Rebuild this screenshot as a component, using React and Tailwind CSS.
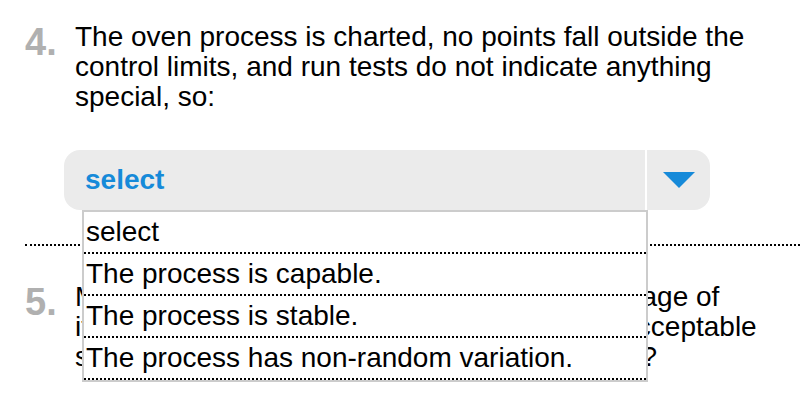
import React from "react";

const options = [
  "select",
  "The process is capable.",
  "The process is stable.",
  "The process has non-random variation.",
];

export default function App() {
  return (
    <div className="w-[800px] h-[406px] overflow-hidden bg-white pt-[22px] pl-[25px] font-['Liberation_Sans',Arial,Helvetica,sans-serif] text-black">
      <div className="flex pr-[25px]">
        <div className="w-[50px] shrink-0 mt-[1px] text-[38px] leading-[38px] font-bold text-[#b0b0b0]">4.</div>
        <div className="flex-1">
          <p className="text-[28px] leading-[30px]">
            The oven process is charted, no points fall outside the control limits, and run tests do not indicate anything special, so:
          </p>
          <div className="relative mt-[38px] -ml-[11px] w-[646px]">
            <div className="flex h-[60px] rounded-[16px] bg-[#ebebeb] overflow-hidden">
              <div className="flex-1 flex items-center pl-[21px] text-[28px] font-bold text-[#168ad9]">select</div>
              <div className="w-[2px] bg-white"></div>
              <div className="w-[63px] flex items-center justify-center">
                <svg width="32" height="16" viewBox="0 0 32 16">
                  <polygon points="0,0 32,0 16,16" fill="#168ad9" />
                </svg>
              </div>
            </div>
            <div className="absolute left-[18px] top-full z-10 w-[566px] bg-white border-2 border-[#cccccc]">
              {options.map((o) => (
                <div key={o} className="border-b-2 border-dotted border-black pl-[2px] py-[5px] text-[28px] leading-[30px] whitespace-nowrap">
                  {o}
                </div>
              ))}
            </div>
          </div>
        </div>
      </div>
      <div className="mt-[34px] border-t-2 border-dotted border-black"></div>
      <div className="flex pr-[25px] pt-[36px]">
        <div className="w-[50px] shrink-0 mt-[1px] text-[38px] leading-[38px] font-bold text-[#b0b0b0]">5.</div>
        <div className="flex-1">
          <p className="text-[28px] leading-[30px]">
            Management would like to know what percentage of items made in the process will be within the acceptable specification limits. What should be done next?
          </p>
        </div>
      </div>
    </div>
  );
}
